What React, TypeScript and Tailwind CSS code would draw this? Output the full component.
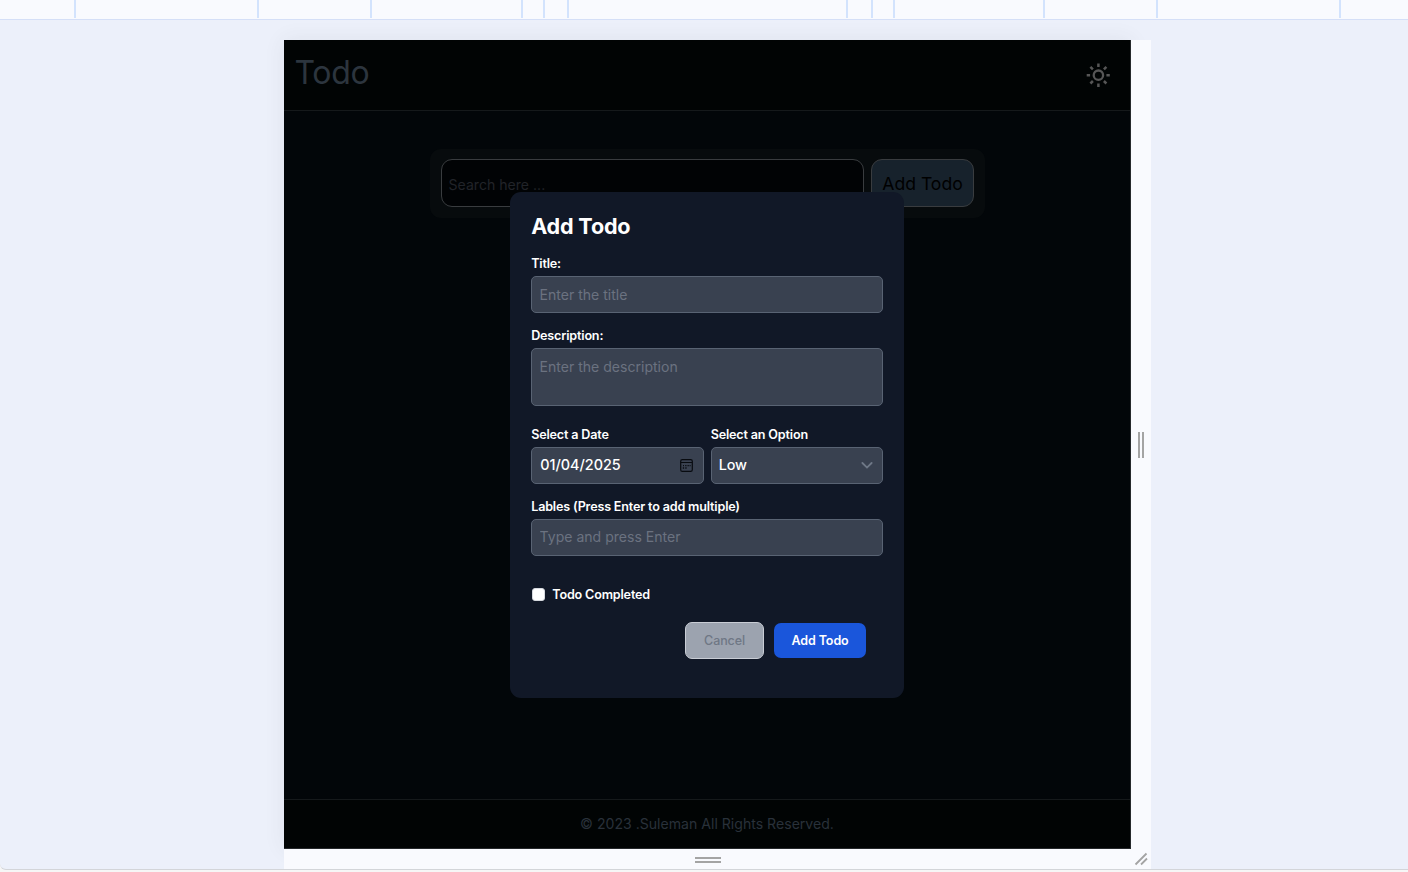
import type { ReactNode } from "react";

const BREAKPOINT_GAPS = [74, 181, 111, 149, 20, 22, 277, 23, 20, 148, 111, 181];

function Ruler() {
  return (
    <div className="flex h-5 shrink-0 border-b border-[#d5dff7] bg-[#f9fafe]">
      {BREAKPOINT_GAPS.map((gap, i) => (
        <span key={i} className="h-[18px] w-0.5 shrink-0 bg-[#d3e3fd]" style={{ marginLeft: gap }} />
      ))}
    </div>
  );
}

function SunIcon() {
  return (
    <svg className="h-[26px] w-[26px]" viewBox="0 0 26 26" fill="none" stroke="#565656">
      <circle cx="13.4" cy="13.2" r="4.7" strokeWidth="2.3" />
      <path
        strokeWidth="2.5"
        d="M13.4 1.4v3.6M13.4 21.4V25M1.7 13.2h3.4M21.4 13.2h3.4M5.4 4.9l2.5 2.5M18.9 19l2.5 2.5M5.4 21.5l2.5-2.5M18.9 7.4l2.5-2.5"
      />
    </svg>
  );
}

function CalendarIcon() {
  return (
    <svg className="h-[13px] w-[13px]" viewBox="0 0 13 13" fill="none" stroke="#080b10">
      <rect x="0.7" y="0.6" width="11.6" height="11.8" rx="1.6" strokeWidth="1.2" />
      <path d="M1 3.5h11" strokeWidth="1" />
      <path d="M5.2 6.6h1.3M7.5 6.6h1.3M9.6 6.6h1M2.8 9h1.3M5.3 9h1.3M3 6.6h1" strokeWidth="1.4" />
    </svg>
  );
}

function Label({ children }: { children: ReactNode }) {
  return <label className="block h-4 text-[12.6px] leading-4 font-semibold tracking-[-0.18px] whitespace-nowrap text-white">{children}</label>;
}

const field =
  "block w-full rounded-[5px] border border-[#596373] bg-[#394150] px-[7.4px] text-[14.05px] text-white placeholder:text-[#6b7280] outline-none";

function Modal() {
  return (
    <div className="absolute top-[152px] left-[226px] h-[506px] w-[394.4px] rounded-[11px] bg-[#111827] px-[21.2px] pt-5">
      <h2 className="h-7 text-[21.6px] leading-7 font-bold tracking-[-0.2px] text-white">Add Todo</h2>
      <div className="mt-4">
        <Label>Title:</Label>
        <input className={`${field} mt-1 h-[37px]`} placeholder="Enter the title" />
      </div>
      <div className="mt-[15px]">
        <Label>Description:</Label>
        <textarea className={`${field} mt-1 h-[58px] resize-none py-[9px] leading-[18px]`} placeholder="Enter the description" />
      </div>
      <div className="mt-[21px] flex gap-[7px]">
        <div className="flex-1">
          <Label>Select a Date</Label>
          <div className="mt-1 flex h-[37px] items-center justify-between rounded-[5px] border border-[#596373] bg-[#394150] pr-[9.5px] pl-2 text-[14.4px] font-medium text-white">
            <span className="-mt-px">01/04/2025</span>
            <CalendarIcon />
          </div>
        </div>
        <div className="flex-1">
          <Label>Select an Option</Label>
          <div className="mt-1 flex h-[37px] items-center justify-between rounded-[5px] border border-[#596373] bg-[#394150] pr-[9.4px] pl-[7px] text-[14.4px] font-medium text-white">
            <span className="-mt-px tracking-[-0.15px]">Low</span>
            <svg className="h-[7px] w-3" viewBox="0 0 12 7" fill="none" stroke="#6f7887" strokeWidth="1.8" strokeLinecap="round">
              <path d="M1.4 1L6 5.6L10.6 1" />
            </svg>
          </div>
        </div>
      </div>
      <div className="mt-[15px]">
        <Label>Lables (Press Enter to add multiple)</Label>
        <input className={`${field} mt-1 h-[37px] pb-0.5`} placeholder="Type and press Enter" />
      </div>
      <div className="mt-[30px] flex h-4 items-center gap-[7.5px] pl-[0.6px]">
        <span className="h-[13px] w-[13px] rounded-[3px] border border-[#d6d9df] bg-white" />
        <div className="pt-0.5">
          <Label>Todo Completed</Label>
        </div>
      </div>
      <div className="mt-5 mr-[17.2px] flex items-center justify-end gap-[10px] pt-[0.4px] text-[12.5px] leading-4">
        <button className="h-[37px] w-[79px] rounded-[7px] border border-[#c9cdd5] bg-[#9ca3af] font-medium tracking-[-0.1px] text-[#6f7785]">Cancel</button>
        <button className="h-[35px] w-[92px] rounded-[7px] bg-[#1a56db] font-semibold tracking-[-0.1px] text-white">Add Todo</button>
      </div>
    </div>
  );
}

function Device() {
  return (
    <div className="relative flex h-[809px] w-[847px] flex-col border-r border-b border-[#25282b] bg-[#020609] shadow-[0_0_20px_rgba(60,64,67,0.08)]">
      <header className="flex h-[71px] shrink-0 items-center justify-between border-b border-[#15191b] bg-[#010404] pr-[19px] pl-[10.5px]">
        <h1 className="-mt-[5px] text-[32px] leading-10 tracking-[-0.3px] text-[#2c353e]">Todo</h1>
        <SunIcon />
      </header>
      <main className="flex-1 pt-[38px]">
        <div className="ml-[146px] flex h-[69px] w-[555px] gap-[7px] rounded-[11px] bg-[#070b0d] py-[10px] pr-[10px] pl-[10.5px]">
          <input
            className="h-12 w-[423.5px] rounded-[11px] border border-[#393c3f] bg-[#010305] px-[7px] pt-0.5 text-[14.1px] outline-none placeholder:text-[#212429]"
            placeholder="Search here ..."
          />
          <button className="h-12 w-[103px] rounded-[11px] border border-[#393c3f] bg-[#17222c] pt-0.5 text-[17.6px] whitespace-nowrap text-black">Add Todo</button>
        </div>
      </main>
      <footer className="flex h-[49px] shrink-0 items-center justify-center border-t border-[#15191b] bg-[#010404] text-[14.1px] text-[#29313a]">
        © 2023 .Suleman All Rights Reserved.
      </footer>
      <Modal />
    </div>
  );
}

export default function App() {
  return (
    <div className="h-[872px] w-[1408px] overflow-hidden bg-[#f6f6f6] font-['Inter',sans-serif]">
      <div className="flex h-[870px] flex-col overflow-hidden rounded-bl-[6px] border-b border-[#d3d5d9] bg-[#ecf0fa]">
        <Ruler />
        <div className="mt-5 ml-[284px] grid w-[867px] grid-cols-[847px_20px] grid-rows-[809px_20px]">
          <Device />
          <div className="relative flex items-center justify-center gap-0.5 bg-[#f9fafe]">
            <span className="h-[26px] w-0.5 bg-[#a4a4a4]" />
            <span className="h-[26px] w-0.5 bg-[#a4a4a4]" />
          </div>
          <div className="relative flex flex-col items-center justify-center gap-0.5 bg-[#f9fafe] pt-0.5">
            <span className="h-0.5 w-[26px] bg-[#a4a4a4]" />
            <span className="h-0.5 w-[26px] bg-[#a4a4a4]" />
          </div>
          <div className="relative bg-[#f9fafe]">
            <svg className="h-5 w-5" viewBox="0 0 20 20" stroke="#a4a4a4" strokeWidth="1.8">
              <path d="M4.5 15.5L15.5 4.5M10 15.5L16 9.5" />
            </svg>
          </div>
        </div>
      </div>
    </div>
  );
}
